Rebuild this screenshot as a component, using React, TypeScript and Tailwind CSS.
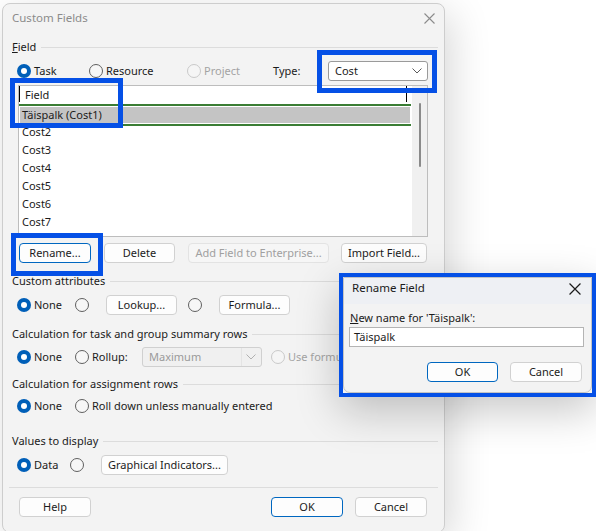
import React from 'react';

const FONT = "font-['Segoe_UI','Noto_Sans',sans-serif]";

function Radio({ checked = false, disabled = false }: { checked?: boolean; disabled?: boolean }) {
  if (checked) {
    return (
      <span className="w-[14px] h-[14px] rounded-full bg-[#005fb8] flex items-center justify-center shrink-0">
        <span className="w-[6px] h-[6px] rounded-full bg-white" />
      </span>
    );
  }
  return (
    <span
      className={
        'block w-[14px] h-[14px] rounded-full border shrink-0 ' +
        (disabled ? 'border-[#c9c9c9] bg-[#f5f5f5]' : 'border-[#5f5f5f] bg-[#f7f7f7]')
      }
    />
  );
}

function RadioItem({
  label,
  checked,
  disabled,
  className = '',
}: {
  label: React.ReactNode;
  checked?: boolean;
  disabled?: boolean;
  className?: string;
}) {
  return (
    <div className={'flex items-center gap-[3px] ' + className}>
      <Radio checked={checked} disabled={disabled} />
      <span className={disabled ? 'text-[#a3a3a3] whitespace-nowrap' : 'text-[#1b1b1b] whitespace-nowrap'}>{label}</span>
    </div>
  );
}

function Btn({
  children,
  className = '',
  primary,
  disabled,
}: {
  children: React.ReactNode;
  className?: string;
  primary?: boolean;
  disabled?: boolean;
}) {
  let tone = 'bg-[#fdfdfd] border-[#d1d1d1] text-[#1b1b1b]';
  if (primary) tone = 'bg-[#fdfdfd] border-[#0067c0] text-[#1b1b1b]';
  if (disabled) tone = 'bg-[#f6f6f6] border-[#e3e3e3] text-[#a0a0a0]';
  return (
    <div className={'h-[20px] rounded-[4px] border flex items-center justify-center whitespace-nowrap shrink-0 ' + tone + ' ' + className}>
      {children}
    </div>
  );
}

function GroupLabel({ children, className = '' }: { children: React.ReactNode; className?: string }) {
  return (
    <div className={'flex items-center h-[18px] ' + className}>
      <span className="text-[#1b1b1b] whitespace-nowrap">{children}</span>
      <div className="flex-1 h-px bg-[#dcdcdc] ml-[5px]" />
    </div>
  );
}

function Chevron({ color = '#5a5a5a' }: { color?: string }) {
  return (
    <svg width="10" height="6" viewBox="0 0 10 6">
      <path d="M0.5 0.5 L5 5 L9.5 0.5" fill="none" stroke={color} strokeWidth="1" />
    </svg>
  );
}

function CloseX({ color, size = 11 }: { color: string; size?: number }) {
  return (
    <svg width={size} height={size} viewBox="0 0 11 11">
      <path d="M0.5 0.5 L10.5 10.5 M10.5 0.5 L0.5 10.5" stroke={color} strokeWidth="1.1" />
    </svg>
  );
}

const rows = ['Cost2', 'Cost3', 'Cost4', 'Cost5', 'Cost6', 'Cost7'];

export default function App() {
  return (
    <div className={'relative w-[596px] h-[531px] bg-white overflow-hidden text-[11px] ' + FONT}>
      {/* Custom Fields dialog */}
      <div className="ml-[2px] mt-[3px] w-[443px] h-[530px] bg-[#f3f3f3] border border-[#cdcdcd] rounded-[8px] shadow-[6px_10px_40px_rgba(0,0,0,0.16)]">
        <div className="h-[28px] flex items-center pl-[9px] pr-[9px] justify-between">
          <span className="text-[11.5px] text-[#8b8b8b]">Custom Fields</span>
          <CloseX color="#8b8b8b" />
        </div>

        <div className="pl-[9px] w-[435px]">
          <GroupLabel className="mt-[6px]">
            <span className="underline">F</span>ield
          </GroupLabel>

          <div className="flex items-center h-[18px] mt-[6px]">
            <RadioItem label="Task" checked className="ml-[5px] w-[72px]" />
            <RadioItem label="Resource" className="w-[98px]" />
            <RadioItem label="Project" disabled className="w-[86px]" />
            <span className="w-[55px] text-[#1b1b1b]">Type:</span>
            <div className="w-[100px] h-[20px] bg-white border border-[#9a9a9a] rounded-[3px] flex items-center justify-between pl-[6px] pr-[5px]">
              <span className="text-[#1b1b1b]">Cost</span>
              <Chevron />
            </div>
          </div>

          {/* field list */}
          <div className="ml-[6px] mt-[5px] w-[410px] h-[152px] border border-[#bdbdbd] bg-white flex">
            <div className="w-[392px] flex flex-col overflow-hidden">
              <div className="h-[18px] shrink-0 flex items-end pb-px relative">
                <div className="absolute left-0 top-0 w-px h-[16px] bg-black" />
                <span className="ml-[6px] text-[#1b1b1b]">Field</span>
                <div className="absolute left-[387px] top-0 w-px h-[16px] bg-black" />
              </div>
              <div className="h-[2px] shrink-0 bg-[#3a7d34]" />
              <div className="h-[16px] shrink-0 bg-[#c4c4c4] flex items-center pl-[2px] mx-px mt-px">
                <span className="text-[#1b1b1b]">Täispalk (Cost1)</span>
              </div>
              <div className="h-px shrink-0 bg-white" />
              <div className="h-[2px] shrink-0 bg-[#3a7d34]" />
              {rows.map((r, i) => (
                <div key={r} className={'h-[18px] shrink-0 flex items-center pl-[3px] ' + (i === 0 ? '-mt-[3px]' : '')}>
                  <span className="text-[#1b1b1b]">{r}</span>
                </div>
              ))}
            </div>
            <div className="flex-1 bg-[#f0f0f0] border-l border-white flex justify-center pt-[17px]">
              <div className="w-[2px] h-[64px] bg-[#8a8a8a] rounded-full" />
            </div>
          </div>

          <div className="flex items-center mt-[6px]">
            <Btn primary className="ml-[7px] w-[72px]">Rename...</Btn>
            <Btn className="ml-[13px] w-[71px]">Delete</Btn>
            <Btn disabled className="ml-[13px] w-[141px]">Add Field to Enterprise...</Btn>
            <Btn className="ml-[12px] w-[86px]">Import Field...</Btn>
          </div>

          <GroupLabel className="mt-[9px]">Custom attributes</GroupLabel>
          <div className="flex items-center h-[20px] mt-[5px]">
            <RadioItem label="None" checked className="ml-[5px] w-[58px]" />
            <Radio />
            <Btn className="ml-[17px] w-[71px]">Lookup...</Btn>
            <div className="ml-[11px]"><Radio /></div>
            <Btn className="ml-[17px] w-[71px]">Formula...</Btn>
          </div>

          <GroupLabel className="mt-[10px]">Calculation for task and group summary rows</GroupLabel>
          <div className="flex items-center h-[20px] mt-[4px]">
            <RadioItem label="None" checked className="ml-[5px] w-[58px]" />
            <RadioItem label="Rollup:" className="w-[67px]" />
            <div className="w-[120px] h-[20px] bg-[#f0f0f0] border border-[#d0d0d0] rounded-[3px] flex items-center justify-between pl-[6px] pr-[5px]">
              <span className="text-[#9a9a9a]">Maximum</span>
              <div className="flex items-center gap-[4px]">
                <div className="w-px h-[18px] bg-[#e4e4e4]" />
                <Chevron color="#b0b0b0" />
              </div>
            </div>
            <RadioItem label="Use formula for subtasks" disabled className="ml-[9px]" />
          </div>

          <GroupLabel className="mt-[8px]">Calculation for assignment rows</GroupLabel>
          <div className="flex items-center h-[20px] mt-[3px]">
            <RadioItem label="None" checked className="ml-[5px] w-[58px]" />
            <RadioItem label="Roll down unless manually entered" />
          </div>

          <GroupLabel className="mt-[16px]">Values to display</GroupLabel>
          <div className="flex items-center h-[20px] mt-[5px]">
            <RadioItem label="Data" checked className="ml-[5px] w-[53px]" />
            <Radio />
            <Btn className="ml-[17px] w-[127px]">Graphical Indicators...</Btn>
          </div>

          <div className="h-px bg-[#dcdcdc] mt-[12px] -ml-[3px]" />

          <div className="flex items-center mt-[9px]">
            <Btn className="ml-[7px] w-[72px]">Help</Btn>
            <Btn primary className="ml-[180px] w-[72px]">OK</Btn>
            <Btn className="ml-[12px] w-[72px]">Cancel</Btn>
          </div>
        </div>
      </div>

      {/* annotation highlights */}
      <div className="absolute left-[317px] top-[50px] w-[120px] h-[43px] border-[5px] border-[#0550e6]" />
      <div className="absolute left-[10px] top-[78px] w-[113px] h-[50px] border-[5px] border-[#0550e6]" />
      <div className="absolute left-[11px] top-[233px] w-[92px] h-[43px] border-[5px] border-[#0550e6]" />

      {/* Rename Field dialog */}
      <div className="absolute left-[339px] top-[273px] w-[257px] h-[124px] border-[4px] border-[#0550e6] bg-[#f3f3f3] shadow-[0_14px_40px_rgba(0,0,0,0.22)]">
        <div className="w-full h-full border border-[#c4c4c4] rounded-b-[7px] overflow-hidden flex flex-col">
          <div className="h-[26px] shrink-0 bg-[#eef0f4] flex items-start justify-between pl-[8px] pr-[10px] pt-[2px]">
            <span className="text-[11.5px] text-[#1b1b1b] leading-[16px]">Rename Field</span>
            <span className="mt-[3px]"><CloseX color="#1b1b1b" size={12} /></span>
          </div>
          <div className="pl-[6px] mt-[5px] h-[18px] flex items-center text-[#1b1b1b]">
            <span><span className="underline">N</span>ew name for 'Täispalk':</span>
          </div>
          <div className="ml-[5px] w-[235px] h-[20px] bg-white border border-[#b4b4b4] flex items-center pl-[4px] text-[#1b1b1b]">
            Täispalk
          </div>
          <div className="flex items-center mt-[15px]">
            <Btn primary className="ml-[83px] w-[71px]">OK</Btn>
            <Btn className="ml-[12px] w-[72px]">Cancel</Btn>
          </div>
        </div>
      </div>
    </div>
  );
}
